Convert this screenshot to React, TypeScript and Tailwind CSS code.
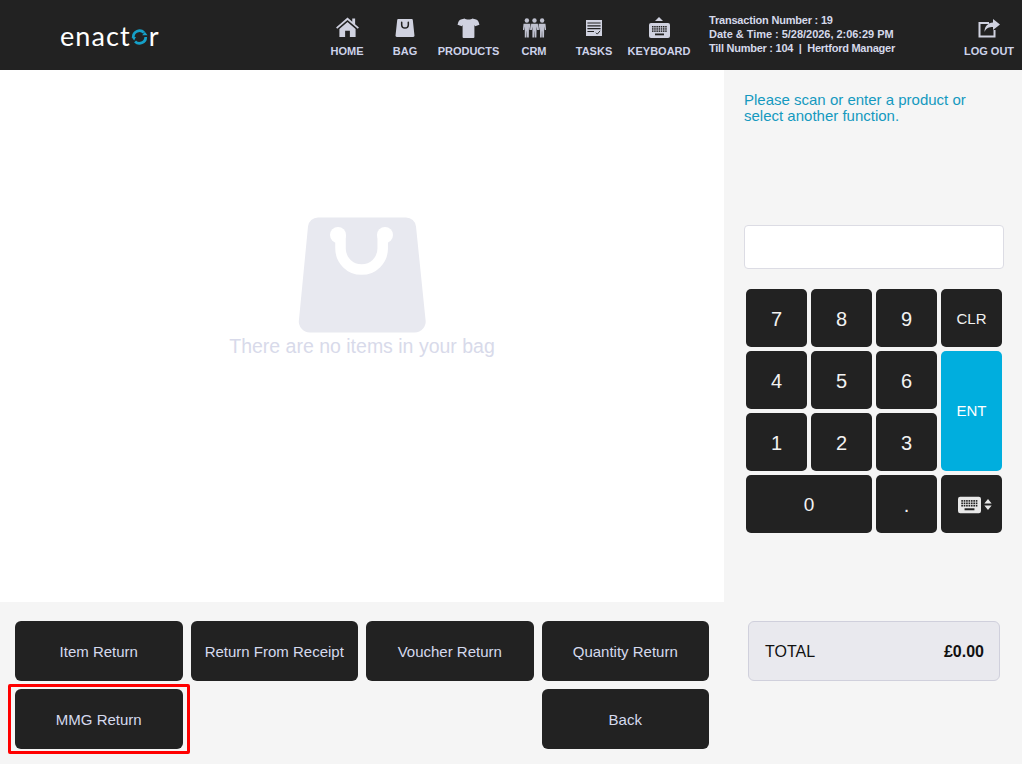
import React from "react";

const Home = () => (
  <svg width="25" height="20" viewBox="0 0 26 21" fill="#d0d2e0" className="mb-[1px]">
    <path d="M1 11 13 .5l5 4.400V1.700h3v5.800l4 3.500-1.200 1.400L13 3.100 2.200 12.400z" />
    <path d="M4.500 12.500 13 5.200l8.500 7.300V21h-6v-6.500h-5V21h-6z" />
  </svg>
);
const Bag = () => (
  <svg width="20" height="18" viewBox="0 0 20 19" className="mb-[1px]">
    <path fill="#d0d2e0" d="M2.800 0h14.400a1 1 0 0 1 1 .9L20 17.400a1.400 1.400 0 0 1-1.400 1.600H1.400A1.400 1.400 0 0 1 0 17.400L1.800.9a1 1 0 0 1 1-.9z" />
    <path fill="none" stroke="#222222" strokeWidth="1.600" strokeLinecap="round" d="M6.500 3.500v2.500a3.500 3.500 0 0 0 7 0V3.500" />
  </svg>
);
const Shirt = () => (
  <svg width="23" height="20" viewBox="0 0 23 21" fill="#d0d2e0">
    <path d="M7.500 0.500c1 1.600 7 1.600 8 0l4 1.200c1.500.5 2.500 1.500 3.500 5.300l-4.500 1.600-.8-1.300V20a1 1 0 0 1-1 1H6.300a1 1 0 0 1-1-1V7.300l-.8 1.300L0 7c1-3.800 2-4.800 3.500-5.300z" />
  </svg>
);
const Crm = () => (
  <svg width="23" height="20" viewBox="0 0 24 21" fill="#bfc1cf">
    {[4, 12, 20].map((x) => (
      <g key={x}>
        <circle cx={x} cy="2.600" r="2.300" />
        <path d={`M${x - 3.500} 6h7l.7 6.500h-1.400l-.6-3.500-.2 11.500h-1.800l-.2-6.500h-.2l-.2 6.500h-1.800L${x - 2.200} 9l-.6 3.500h-1.400z`} />
      </g>
    ))}
  </svg>
);
const Tasks = () => (
  <svg width="16" height="16" viewBox="0 0 17 17" className="mb-[2px]">
    <rect width="17" height="17" fill="#d0d2e0" />
    <path stroke="#222222" strokeWidth="1.200" d="M1.500 3.200h14M1.500 6.200h14M1.500 9.200h14M1.500 12.200h7" />
    <path fill="none" stroke="#222222" strokeWidth="1" d="M10.500 13.500l1.500 1.500 3-3.500" />
  </svg>
);
const Keyboard = ({ w = 21, h = 15, c = "#d0d2e0", bg = "#222222" }: { w?: number; h?: number; c?: string; bg?: string }) => (
  <svg width={w} height={h} viewBox="0 0 21 15">
    <rect width="21" height="15" rx="2" fill={c} />
    {[3, 5.200, 7.400].map((y) =>
      [3, 5.200, 7.400, 9.600, 11.800, 14, 16.200].map((x) => (
        <rect key={`${x}-${y}`} x={x} y={y} width="1.500" height="1.500" fill={bg} />
      )),
    )}
    <rect x="6" y="10.500" width="9" height="1.800" fill={bg} />
  </svg>
);
const Logout = () => (
  <svg width="22" height="19" viewBox="0 0 22 19" fill="none">
    <path stroke="#d0d2e0" strokeWidth="2" d="M11 4H1.500v13.500h15V11" />
    <path fill="#d0d2e0" d="M15 0l7 5.500-7 5.500V8c-4 0-7 1-8.500 5 0-6 3.500-9 8.500-9.500z" />
  </svg>
);

const nav = [
  { label: "HOME", width: "w-[58px]", icon: <Home /> },
  { label: "BAG", width: "w-[58px]", icon: <Bag /> },
  { label: "PRODUCTS", width: "w-[69px]", icon: <Shirt /> },
  { label: "CRM", width: "w-[62px]", icon: <Crm /> },
  { label: "TASKS", width: "w-[58px]", icon: <Tasks /> },
  {
    label: "KEYBOARD",
    width: "w-[72px]",
    icon: (
      <div className="flex flex-col items-center gap-[2px]">
        <svg width="8" height="4" viewBox="0 0 8 4"><path d="M0 4 4 0l4 4z" fill="#d0d2e0" /></svg>
        <Keyboard />
      </div>
    ),
  },
];

const NavItem = ({ label, width, icon }: { label: string; width: string; icon: React.ReactNode }) => (
  <div className={`${width} flex shrink-0 flex-col items-center`}>
    <div className="flex h-[22px] items-end">{icon}</div>
    <div className="mt-[7px] text-[11px] font-bold leading-[13px] text-[#cdd3ea]">{label}</div>
  </div>
);

const dark = "bg-[#222222] text-[#f2f2f2]";

const Key = ({ children, className = `${"bg-[#222222] text-[#f2f2f2]"} pt-[1px]` }: { children: React.ReactNode; className?: string }) => (
  <button className={`flex items-center justify-center rounded-[5px] ${className}`}>{children}</button>
);

const Action = ({ children, boxed = false, className = "" }: { children: string; boxed?: boolean; className?: string }) => (
  <div className={`relative ${className}`}>
    <button className="flex h-[60px] w-full items-center justify-center rounded-[6px] bg-[#222222] pt-[3px] text-[15px] text-[#d5daee]">{children}</button>
    {boxed && <div className="pointer-events-none absolute -bottom-[5px] -left-[7px] -right-[7px] -top-[5px] rounded-[2px] border-[3px] border-[#ff0000]" />}
  </div>
);

export default function App() {
  return (
    <div className="flex h-[764px] w-[1022px] flex-col overflow-hidden bg-[#f5f5f5] font-['Liberation_Sans',Arial,sans-serif]">
      <header className="flex h-[70px] shrink-0 items-start bg-[#222222]">
        <div className="flex h-full w-[318px] shrink-0 items-center pl-[60px]">
          <div className="flex items-center font-['Lato',sans-serif] text-[27px] leading-none tracking-[1.1px] text-white">
            <span>enact</span>
            <svg width="17" height="16" viewBox="0 0 18 18" fill="none" className="mt-[4px]">
              <path stroke="#15a0c8" strokeWidth="3" d="M2 9a7 7 0 0 1 12-5" />
              <path stroke="#15a0c8" strokeWidth="3" d="M16 9a7 7 0 0 1-12 5" />
              <path fill="#15a0c8" d="M12 7h6l-3-4zM0 9h5l-2 4z" />
            </svg>
            <span className="ml-[1px]">r</span>
          </div>
        </div>
        <nav className="flex pt-[16px]">
          {nav.map((n) => (
            <NavItem key={n.label} {...n} />
          ))}
        </nav>
        <div className="ml-[14px] w-[240px] shrink-0 pt-[13px] text-[11px] font-bold leading-[14px] text-[#d5d9ea]">
          <div className="tracking-[-0.2px]">Transaction Number : 19</div>
          <div className="tracking-[-0.03px]">Date &amp; Time : 5/28/2026, 2:06:29 PM</div>
          <div className="tracking-[-0.25px]">Till Number : 104&nbsp; |&nbsp; Hertford Manager</div>
        </div>
        <div className="ml-[11px] flex w-[58px] shrink-0 flex-col items-center pt-[16px]">
          <div className="flex h-[22px] items-end"><Logout /></div>
          <div className="mt-[7px] text-[11px] font-bold leading-[13px] text-[#cdd3ea]">LOG OUT</div>
        </div>
      </header>

      <div className="flex min-h-0 flex-1">
        <div className="flex w-[724px] shrink-0 flex-col">
          <main className="flex h-[532px] flex-col items-center bg-white pt-[147px]">
            <svg width="128" height="116" viewBox="0 0 128 116">
              <path fill="#e8e9f0" d="M20 0.500h88a10 10 0 0 1 10 9l9.500 93a11 11 0 0 1-11 13H12a11 11 0 0 1-11-13l9-93a10 10 0 0 1 10-9z" />
              <path fill="none" stroke="#ffffff" strokeWidth="10.500" d="M42.500 18v13.500a21.100 21.100 0 0 0 42.200 0V18" />
              <circle cx="40" cy="18" r="8" fill="#ffffff" />
              <circle cx="87" cy="18" r="8" fill="#ffffff" />
            </svg>
            <div className="text-[19.500px] leading-[26px] text-[#d8daea]">There are no items in your bag</div>
          </main>
          <div className="grid grid-cols-4 grid-rows-[60px_60px] gap-2 pl-[15px] pr-[15px] pt-[19px]">
            <Action>Item Return</Action>
            <Action>Return From Receipt</Action>
            <Action>Voucher Return</Action>
            <Action>Quantity Return</Action>
            <Action boxed>MMG Return</Action>
            <Action className="col-start-4">Back</Action>
          </div>
        </div>

        <aside className="flex flex-1 flex-col pt-[22px]">
          <p className="pl-[20px] pr-[30px] text-[15px] leading-[16px] text-[#1499bf]">
            Please scan or enter a product or select another function.
          </p>
          <div className="ml-[20px] mt-[101px] h-[44px] w-[260px] rounded-[4px] border border-[#dcdce4] bg-white" />
          <div className="ml-[22px] mt-[20px] grid w-[256px] grid-cols-[repeat(4,61px)] grid-rows-[repeat(4,58px)] gap-x-[4px] gap-y-[4px] text-[20px]">
            <Key>7</Key>
            <Key>8</Key>
            <Key>9</Key>
            <Key className={`${dark} pt-[3px] text-[15px]`}>CLR</Key>
            <Key>4</Key>
            <Key>5</Key>
            <Key>6</Key>
            <Key className="row-span-2 bg-[#00aede] pt-[1px] text-[15px] text-white">ENT</Key>
            <Key>1</Key>
            <Key>2</Key>
            <Key>3</Key>
            <Key className={`${dark} col-span-2 pt-[3px] text-[19px]`}>0</Key>
            <Key>.</Key>
            <Key>
              <div className="ml-[6px] flex items-center gap-[3px]">
                <Keyboard w={23} h={18} c="#e8e8e8" />
                <svg width="8" height="11" viewBox="0 0 8 12" fill="#e8e8e8"><path d="M0 5 4 0l4 5zM0 7l4 5 4-5z" /></svg>
              </div>
            </Key>
          </div>
          <div className="ml-[24px] mt-[88px] flex h-[60px] w-[252px] items-center justify-between rounded-[6px] border border-[#d0d0dc] bg-[#e9e9ee] pl-[16px] pr-[15px] pt-[1px] text-[16px] text-[#111111]">
            <span>TOTAL</span>
            <span className="font-bold">£0.00</span>
          </div>
        </aside>
      </div>
    </div>
  );
}
